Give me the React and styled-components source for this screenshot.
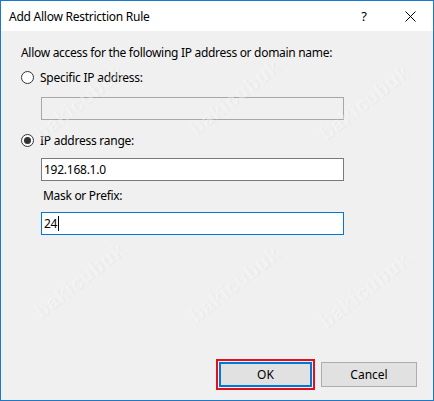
import React from "react";
import styled, { createGlobalStyle } from "styled-components";

const Global = createGlobalStyle`
  html, body { margin: 0; padding: 0; background: #f0f0f0; }
  body { font-family: "Noto Sans", "Open Sans", sans-serif; }
  * { box-sizing: border-box; }
`;

const Window = styled.div`
  position: relative;
  width: 434px;
  height: 401px;
  border: 1px solid #1b79cc;
  background: #f0f0f0;
  display: flex;
  flex-direction: column;
  overflow: hidden;
  font-size: 12px;
  color: #000;
`;

const TitleBar = styled.div`
  height: 30px;
  background: #fff;
  display: flex;
  align-items: center;
  padding-left: 8px;
  flex-shrink: 0;
`;

const Title = styled.div`
  flex: 1;
  font-size: 12px;
  letter-spacing: -0.25px;
`;

const TitleButton = styled.div`
  width: ${(p) => p.$w}px;
  height: 30px;
  display: flex;
  align-items: center;
  justify-content: center;
  font-size: 13px;
`;

const Body = styled.div`
  flex: 1;
  display: flex;
  flex-direction: column;
  padding: 14px 16px 13px 20px;
`;

const Label = styled.div`
  height: 16px;
  line-height: 16px;
  margin-left: ${(p) => p.$indent || 0}px;
  margin-top: ${(p) => p.$top || 0}px;
  letter-spacing: -0.3px;
`;

const RadioRow = styled.label`
  display: flex;
  align-items: center;
  height: 16px;
  gap: 6px;
  margin-top: ${(p) => p.$top}px;
  letter-spacing: -0.25px;
`;

const RadioCircle = styled.span`
  width: 13px;
  height: 13px;
  border-radius: 50%;
  border: 1px solid #333;
  background: #fff;
  display: flex;
  align-items: center;
  justify-content: center;
  &::after {
    content: "";
    width: 7px;
    height: 7px;
    border-radius: 50%;
    background: #333;
    display: ${(p) => (p.$checked ? "block" : "none")};
  }
`;

const TextBox = styled.div`
  margin-left: 20px;
  margin-top: ${(p) => p.$top}px;
  width: 303px;
  height: 23px;
  border: 1px solid ${(p) => (p.$focus ? "#0078d7" : p.$disabled ? "#a7a7a7" : "#7a7a7a")};
  background: ${(p) => (p.$disabled ? "#f0f0f0" : "#fff")};
  display: flex;
  align-items: center;
  padding-left: 2px;
  letter-spacing: -0.25px;
`;

const Caret = styled.span`
  display: inline-block;
  width: 1px;
  height: 15px;
  background: #000;
  margin-left: 1px;
`;

const Spacer = styled.div`
  flex: 1;
`;

const Buttons = styled.div`
  display: flex;
  justify-content: flex-end;
  gap: 9px;
`;

const Button = styled.div`
  position: relative;
  width: ${(p) => p.$w}px;
  height: 25px;
  background: #e1e1e1;
  border: ${(p) => (p.$default ? "2px solid #0078d7" : "1px solid #adadad")};
  display: flex;
  align-items: center;
  justify-content: center;
  font-size: 12px;
`;

const Highlight = styled.div`
  position: absolute;
  left: -5px;
  top: -5px;
  right: -5px;
  bottom: -5px;
  border: 2px solid #e0101d;
  pointer-events: none;
`;

const Watermark = styled.div`
  position: absolute;
  left: ${(p) => p.$x}px;
  top: ${(p) => p.$y}px;
  transform: rotate(-38deg);
  font-family: "Liberation Sans", sans-serif;
  font-weight: bold;
  font-size: 20px;
  color: rgba(255, 255, 255, 0.4);
  text-shadow: 1px 1px 1px rgba(0, 0, 0, 0.035);
  pointer-events: none;
  letter-spacing: 1px;
`;

const marks = [
  [25, 90], [180, 85], [310, 90], [25, 268], [180, 272], [310, 278],
];

export default function App() {
  return (
    <>
      <Global />
      <Window>
        <TitleBar>
          <Title>Add Allow Restriction Rule</Title>
          <TitleButton $w={46}>?</TitleButton>
          <TitleButton $w={46}>
            <svg width="11" height="11" viewBox="0 0 11 11">
              <path d="M0.5 0.5 L10.5 10.5 M10.5 0.5 L0.5 10.5" stroke="#000" strokeWidth="1" />
            </svg>
          </TitleButton>
        </TitleBar>
        <Body>
          <Label>Allow access for the following IP address or domain name:</Label>
          <RadioRow $top={8}>
            <RadioCircle />
            Specific IP address:
          </RadioRow>
          <TextBox $top={12} $disabled />
          <RadioRow $top={12}>
            <RadioCircle $checked />
            IP address range:
          </RadioRow>
          <TextBox $top={10}>192.168.1.0</TextBox>
          <Label $indent={22} $top={7}>Mask or Prefix:</Label>
          <TextBox $top={8} $focus>
            24<Caret />
          </TextBox>
          <Spacer />
          <Buttons>
            <Button $w={93} $default>
              OK
              <Highlight />
            </Button>
            <Button $w={96}>Cancel</Button>
          </Buttons>
        </Body>
        {marks.map(([x, y], i) => (
          <Watermark key={i} $x={x} $y={y}>bakicubuk</Watermark>
        ))}
      </Window>
    </>
  );
}
